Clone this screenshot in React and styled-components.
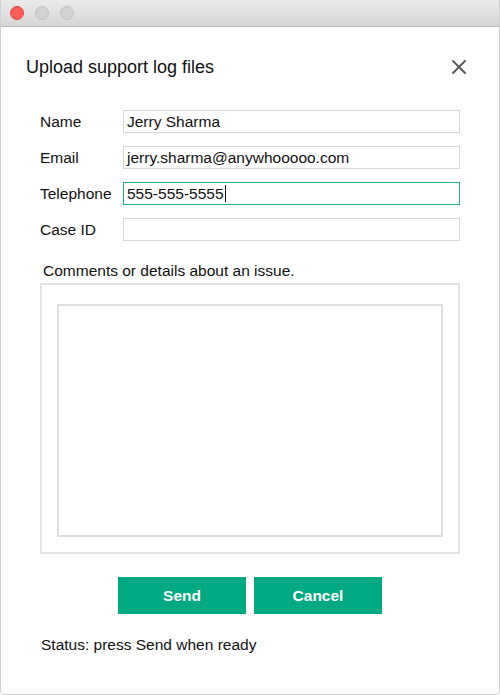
import React from "react";
import styled, { createGlobalStyle } from "styled-components";

const GlobalStyle = createGlobalStyle`
	html, body {
		margin: 0;
		padding: 0;
		background: #ffffff;
	}
	body {
		font-family: "Liberation Sans", Arial, sans-serif;
		color: #111111;
	}
`;

const fields = [
	{ label: "Name", value: "Jerry Sharma" },
	{ label: "Email", value: "jerry.sharma@anywhooooo.com" },
	{ label: "Telephone", value: "555-555-5555", focused: true },
	{ label: "Case ID", value: "" },
];

function App() {
	return (
		<>
			<GlobalStyle />
			<Window>
				<TitleBar>
					<Light $color="#fc5f57" $edge="#e2463f" />
					<Light $color="#d2d2d2" $edge="#c2c2c2" />
					<Light $color="#d2d2d2" $edge="#c2c2c2" />
				</TitleBar>
				<Content>
					<Header>
						<Title>Upload support log files</Title>
						<CloseButton aria-label="close">
							<svg width="14" height="14" viewBox="0 0 14 14">
								<path d="M1 1 L13 13 M13 1 L1 13" stroke="#555" strokeWidth="1.8" strokeLinecap="round" />
							</svg>
						</CloseButton>
					</Header>
					<FormGrid>
						{fields.map(function (f, i) {
							return (
								<React.Fragment key={i}>
									<Label>{f.label}</Label>
									<Field $focused={f.focused}>
										{f.value}
										{f.focused ? <Caret /> : null}
									</Field>
								</React.Fragment>
							);
						})}
					</FormGrid>
					<CommentsLabel>Comments or details about an issue.</CommentsLabel>
					<CommentsFrame>
						<CommentsArea />
					</CommentsFrame>
					<ButtonRow>
						<Button>Send</Button>
						<Button>Cancel</Button>
					</ButtonRow>
					<Status>Status: press Send when ready</Status>
				</Content>
			</Window>
		</>
	);
}

export default App;

const Window = styled.div`
	box-sizing: border-box;
	width: 500px;
	height: 695px;
	border: 1px solid #cfcfcf;
	border-top: none;
	border-radius: 0 0 5px 5px;
	background: #ffffff;
	overflow: hidden;
	display: flex;
	flex-direction: column;
`;

const TitleBar = styled.div`
	box-sizing: border-box;
	height: 27px;
	flex-shrink: 0;
	background: linear-gradient(#ebebeb, #d6d6d6);
	border-bottom: 1px solid #b9b9b9;
	display: flex;
	align-items: center;
	gap: 11px;
	padding-left: 9px;
`;

const Light = styled.span`
	box-sizing: border-box;
	width: 14px;
	height: 14px;
	border-radius: 50%;
	background: ${(p) => p.$color};
	border: 1px solid ${(p) => p.$edge};
`;

const Content = styled.div`
	display: flex;
	flex-direction: column;
	padding: 0 40px 0 25px;
`;

const Header = styled.div`
	display: flex;
	align-items: center;
	justify-content: space-between;
	height: 26px;
	margin-top: 27px;
`;

const Title = styled.h1`
	margin: 0;
	font-size: 18px;
	font-weight: 400;
	color: #111;
`;

const CloseButton = styled.button`
	border: none;
	background: none;
	padding: 0;
	margin-right: -7px;
	width: 14px;
	height: 14px;
	display: flex;
`;

const FormGrid = styled.div`
	display: grid;
	grid-template-columns: 83px 1fr;
	grid-auto-rows: 23px;
	row-gap: 13px;
	align-items: center;
	margin-top: 30px;
	padding-left: 14px;
	margin-right: -1px;
`;

const Label = styled.div`
	font-size: 15.5px;
	color: #111;
`;

const Field = styled.div`
	box-sizing: border-box;
	height: 23px;
	border: 1px solid ${(p) => (p.$focused ? "#1fae88" : "#d6d6d6")};
	padding: 0 3px;
	font-size: 15.5px;
	line-height: 21px;
	color: #111;
	display: flex;
	align-items: center;
	white-space: nowrap;
`;

const Caret = styled.span`
	display: inline-block;
	width: 1px;
	height: 17px;
	background: #111;
	margin-left: 1px;
`;

const CommentsLabel = styled.div`
	font-size: 15.5px;
	color: #111;
	margin-top: 21px;
	padding-left: 17px;
	line-height: 17px;
`;

const CommentsFrame = styled.div`
	box-sizing: border-box;
	height: 271px;
	margin: 4px -1px 0 14px;
	border: 2px solid #e3e3e3;
	padding: 19px 15px 15px 15px;
	display: flex;
`;

const CommentsArea = styled.div`
	flex: 1;
	border: 2px solid #dedede;
`;

const ButtonRow = styled.div`
	display: flex;
	justify-content: center;
	gap: 8px;
	margin-top: 23px;
	padding-left: 15px;
`;

const Button = styled.button`
	width: 128px;
	height: 37px;
	border: none;
	background: #01a982;
	color: #ffffff;
	font-family: "Liberation Sans", Arial, sans-serif;
	font-size: 15.5px;
	font-weight: 700;
	cursor: pointer;
`;

const Status = styled.div`
	font-size: 15.5px;
	color: #111;
	margin-top: 22px;
	padding-left: 15px;
`;
